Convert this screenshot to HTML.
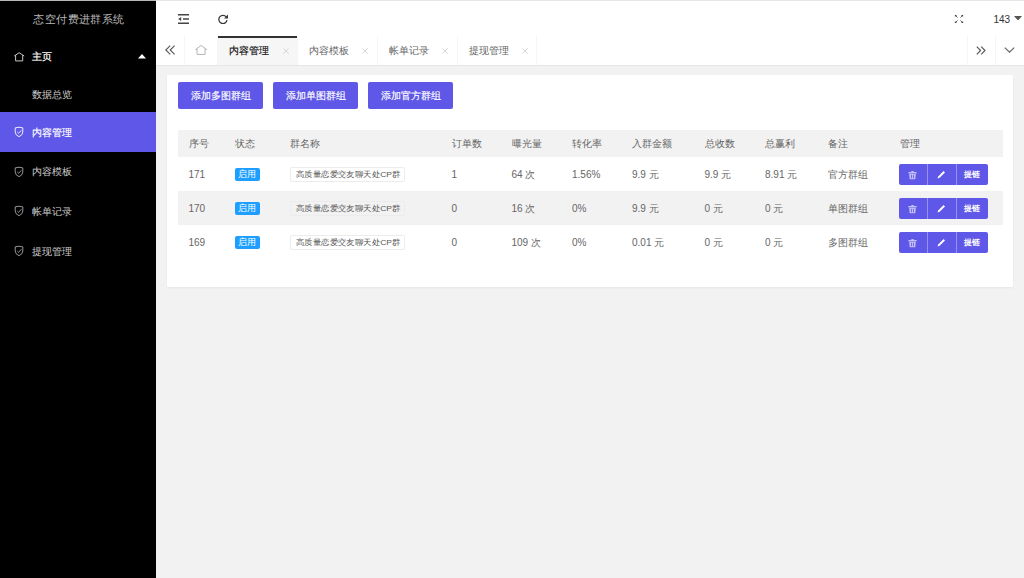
<!DOCTYPE html>
<html><head><meta charset="utf-8">
<style>
*{margin:0;padding:0;box-sizing:border-box}
html,body{width:1024px;height:578px;overflow:hidden;background:#f2f2f2;font-family:"Liberation Sans",sans-serif;color:#666}
.abs{position:absolute}
#topline{position:absolute;left:0;top:0;width:1024px;height:1px;background:#e6e6e6;z-index:10}
#topline2{position:absolute;left:0;top:0;width:156px;height:1px;background:#b9b9b9;z-index:11}
#side{position:absolute;left:0;top:0;width:156px;height:578px;background:#000}
.logo{position:absolute;left:0.8px;top:0.6px;width:156px;height:36px;line-height:36px;text-align:center;color:rgba(255,255,255,.72);font-size:12px;transform:scale(0.95);transform-origin:78px 18.5px}
.nav{position:absolute;left:0;width:156px;height:40px;line-height:40px;font-size:10px;color:rgba(255,255,255,.8)}
.nav .t{position:absolute;left:32px;top:1px}
.nav svg{position:absolute;left:14.4px;top:14.4px}
.nav.on{background:#5f57e7;color:#fff;-webkit-text-stroke:0.15px #fff}
#header{position:absolute;left:156px;top:0;width:868px;height:35px;background:#fff}
#tabs{position:absolute;left:156px;top:35px;width:868px;height:30.6px;background:#fff;border-bottom:1px solid #e6e6e6}
.tab{position:absolute;top:0;height:29px;line-height:29px;font-size:10px;color:#666}
.tab .x{position:absolute;top:12.5px;line-height:0}
.sep{position:absolute;top:1px;width:1px;height:28.6px;background:#f5f5f5}
#card{position:absolute;left:167px;top:75px;width:846px;height:212px;background:#fff;box-shadow:0 1px 2px 0 rgba(0,0,0,.05)}
.btn{position:absolute;top:82px;height:27px;width:85px;line-height:28px;-webkit-text-stroke:0.15px #fff;background:#5f57e7;color:#fff;text-align:center;font-size:10px;border-radius:2px}
table{position:absolute;left:178px;top:130px;width:825px;border-collapse:collapse;table-layout:fixed;font-size:10px;color:#666}
th{height:27px;background:#f2f2f2;font-weight:normal;text-align:left;padding-left:10.5px}
td{height:34px;text-align:left;padding-left:10.5px;padding-top:1px;white-space:nowrap}
tr.even td{background:#f2f2f2}
.badge{display:inline-block;width:25px;height:13px;line-height:13px;background:#1e9fff;color:#fff;font-size:8.5px;text-align:center;border-radius:2px;vertical-align:middle}
.gname{display:inline-block;position:relative;width:114.5px;height:14.5px;border:1px solid #ececec;border-radius:2px;vertical-align:middle;overflow:hidden}
.gname i{position:absolute;left:4.5px;top:0;line-height:13px;font-style:normal;font-size:8px;letter-spacing:0;color:#555;white-space:nowrap;transform:scaleX(1.052);transform-origin:0 50%}
.gname b{font-weight:normal;letter-spacing:0}
.ops{display:inline-block;height:21px;vertical-align:middle;white-space:nowrap;margin-left:-1px}
.op{display:inline-block;height:21px;background:#5f57e7;color:#fff;vertical-align:top;text-align:center;line-height:21px;font-size:8px;font-weight:500}
.op svg{display:block;margin-left:auto;margin-right:auto}
</style></head><body>
<div id="topline"></div><div id="topline2"></div>
<div id="side">
  <div class="logo">态空付费进群系统</div>
  <div class="nav" style="top:35.5px;color:#fff">
    <svg width="11" height="11" viewBox="0 0 11 11" style="top:16px;left:14px"><path d="M0.2 4 L5.2 0.7 L10.2 4 M1.6 3.2 V8.9 H8.7 V3.2" fill="none" stroke="#c8c8c8" stroke-width="1"/></svg>
    <span class="t" style="-webkit-text-stroke:0.2px #fff">主页</span>
    <svg width="8" height="4.5" viewBox="0 0 8 4.5" style="left:137.5px;top:18.5px"><path d="M0 4.5 L4 0 L8 4.5Z" fill="#fff"/></svg>
  </div>
  <div class="nav" style="top:74.5px;height:37px;line-height:37px"><span class="t">数据总览</span></div>
  <div class="nav on" style="top:111.5px">
    <svg width="10" height="11" viewBox="0 0 10 11"><path d="M1.2 1.9 Q5 0.5 8.8 1.9 V6 Q8.8 9.1 5 10.7 Q1.2 9.1 1.2 6 Z M3.3 6 L4.5 7.2 L7.5 4.3" fill="none" stroke="#fff" stroke-width="0.9"/></svg>
    <span class="t">内容管理</span></div>
  <div class="nav" style="top:151.3px">
    <svg width="10" height="11" viewBox="0 0 10 11"><path d="M1.2 1.9 Q5 0.5 8.8 1.9 V6 Q8.8 9.1 5 10.7 Q1.2 9.1 1.2 6 Z M3.3 6 L4.5 7.2 L7.5 4.3" fill="none" stroke="#b0b0b0" stroke-width="0.85"/></svg>
    <span class="t">内容模板</span></div>
  <div class="nav" style="top:191px">
    <svg width="10" height="11" viewBox="0 0 10 11"><path d="M1.2 1.9 Q5 0.5 8.8 1.9 V6 Q8.8 9.1 5 10.7 Q1.2 9.1 1.2 6 Z M3.3 6 L4.5 7.2 L7.5 4.3" fill="none" stroke="#b0b0b0" stroke-width="0.85"/></svg>
    <span class="t">帐单记录</span></div>
  <div class="nav" style="top:230.8px">
    <svg width="10" height="11" viewBox="0 0 10 11"><path d="M1.2 1.9 Q5 0.5 8.8 1.9 V6 Q8.8 9.1 5 10.7 Q1.2 9.1 1.2 6 Z M3.3 6 L4.5 7.2 L7.5 4.3" fill="none" stroke="#b0b0b0" stroke-width="0.85"/></svg>
    <span class="t">提现管理</span></div>
</div>

<div id="header">
  <!-- shrink icon -->
  <svg class="abs" style="left:22px;top:14px" width="11" height="10" viewBox="0 0 11 10"><path d="M0 0.75 H11 M5 5 H11 M0 9.25 H11" stroke="#444" stroke-width="1.5"/><path d="M0.2 5 L3.2 2.9 V7.1 Z" fill="#444"/></svg>
  <!-- refresh -->
  <svg class="abs" style="left:62px;top:14px" width="10" height="10" viewBox="0 0 10 10"><path d="M8.2 2.9 A4.1 4.1 0 1 0 9 6.2" fill="none" stroke="#3a3a3a" stroke-width="1.3"/><path d="M10 0.6 V4.6 H6 Z" fill="#3a3a3a"/></svg>
  <!-- fullscreen -->
  <svg class="abs" style="left:798px;top:14px" width="10" height="10" viewBox="0 0 10 10"><g stroke="#444" stroke-width="0.8" fill="none"><path d="M1.6 1.6 L3.6 3.6 M8.4 1.6 L6.4 3.6 M1.6 8.4 L3.6 6.4 M8.4 8.4 L6.4 6.4"/></g><g fill="#444"><path d="M0.9 0.9 H3.1 L0.9 3.1Z M9.1 0.9 H6.9 L9.1 3.1Z M0.9 9.1 H3.1 L0.9 6.9Z M9.1 9.1 H6.9 L9.1 6.9Z"/></g></svg>
  <div class="abs" style="left:837.5px;top:12.5px;font-size:10px;color:#333;line-height:13px">143</div>
  <svg class="abs" style="left:857.5px;top:15.5px" width="8" height="4.5" viewBox="0 0 8 4.5"><path d="M0 0 H8 L4 4.5Z" fill="#555"/></svg>
</div>

<div id="tabs">
  <svg class="abs" style="left:9px;top:10px" width="11" height="11" viewBox="0 0 11 11"><path d="M5.2 0.6 L0.8 5 L5.2 9.4 M9.6 0.6 L5.2 5 L9.6 9.4" fill="none" stroke="#555" stroke-width="1.1"/></svg>
  <div class="sep" style="left:28px"></div>
  <svg class="abs" style="left:39px;top:10px" width="12" height="11" viewBox="0 0 12 11"><path d="M0.3 4.8 L6.2 0.4 L11.9 4.8 M2 3.5 V9.4 H10.1 V3.5" fill="none" stroke="#b4b4b4" stroke-width="1"/></svg>
  <div class="sep" style="left:61px"></div>
  <div class="tab" style="left:62px;width:79px;background:#f6f6f6;top:2px;height:27.6px;line-height:28px;color:#111"><span style="position:absolute;left:11px;-webkit-text-stroke:0.15px #111">内容管理</span><span class="x" style="left:65px;top:11.3px"><svg width="6" height="6" viewBox="0 0 6 6" style="display:block"><path d="M0.3 0.3 L5.7 5.7 M5.7 0.3 L0.3 5.7" stroke="#cfcfcf" stroke-width="0.8"/></svg></span></div>
  <div class="abs" style="left:62px;top:1px;width:79px;height:2px;background:#333"></div>
  <div class="sep" style="left:141px"></div>
  <div class="tab" style="left:142px;width:79px;line-height:32px"><span style="position:absolute;left:11px">内容模板</span><span class="x" style="left:64px"><svg width="6" height="6" viewBox="0 0 6 6" style="display:block"><path d="M0.3 0.3 L5.7 5.7 M5.7 0.3 L0.3 5.7" stroke="#cfcfcf" stroke-width="0.8"/></svg></span></div>
  <div class="sep" style="left:221px"></div>
  <div class="tab" style="left:222px;width:79px;line-height:32px"><span style="position:absolute;left:11px">帐单记录</span><span class="x" style="left:64px"><svg width="6" height="6" viewBox="0 0 6 6" style="display:block"><path d="M0.3 0.3 L5.7 5.7 M5.7 0.3 L0.3 5.7" stroke="#cfcfcf" stroke-width="0.8"/></svg></span></div>
  <div class="sep" style="left:301px"></div>
  <div class="tab" style="left:302px;width:79px;line-height:32px"><span style="position:absolute;left:11px">提现管理</span><span class="x" style="left:64px"><svg width="6" height="6" viewBox="0 0 6 6" style="display:block"><path d="M0.3 0.3 L5.7 5.7 M5.7 0.3 L0.3 5.7" stroke="#cfcfcf" stroke-width="0.8"/></svg></span></div>
  <div class="sep" style="left:380px"></div>
  <div class="sep" style="left:811px"></div>
  <svg class="abs" style="left:820px;top:11px" width="11" height="9" viewBox="0 0 11 9"><path d="M0.8 0.6 L4.6 4.5 L0.8 8.4 M5.2 0.6 L9 4.5 L5.2 8.4" fill="none" stroke="#5a5a5a" stroke-width="1.2"/></svg>
  <div class="sep" style="left:839px"></div>
  <svg class="abs" style="left:848px;top:12px" width="11" height="6" viewBox="0 0 11 6"><path d="M0.8 0.6 L5.5 5.2 L10.2 0.6" fill="none" stroke="#666" stroke-width="1.2"/></svg>
</div>

<div id="card"></div>
<div class="btn" style="left:178px">添加多图群组</div>
<div class="btn" style="left:273px">添加单图群组</div>
<div class="btn" style="left:368px">添加官方群组</div>

<table>
<colgroup><col style="width:46px"><col style="width:55.5px"><col style="width:161.5px"><col style="width:60px"><col style="width:60.5px"><col style="width:60px"><col style="width:72.5px"><col style="width:60.5px"><col style="width:62.5px"><col style="width:72px"><col style="width:114px"></colgroup>
<tr><th>序号</th><th>状态</th><th>群名称</th><th>订单数</th><th>曝光量</th><th>转化率</th><th>入群金额</th><th>总收数</th><th>总赢利</th><th>备注</th><th>管理</th></tr>
<tr><td>171</td><td><span class="badge">启用</span></td><td><span class="gname"><i>高质量恋爱交友聊天处<b>CP</b>群</i></span></td><td>1</td><td>64 次</td><td>1.56%</td><td>9.9 元</td><td>9.9 元</td><td>8.91 元</td><td>官方群组</td><td><span class="ops"><span class="op" style="width:28px;border-radius:2px 0 0 2px"><svg width="9" height="9" viewBox="0 0 9 9" style="margin-top:6.5px"><g fill="rgba(255,255,255,.62)"><rect x="3.3" y="0" width="2.4" height="1.1"/><rect x="0.3" y="1.1" width="8.4" height="1.3" rx="0.5"/><path d="M1.2 2.9 H7.8 L7.3 8.2 H1.7Z"/></g><g fill="#5f57e7"><rect x="3" y="3.8" width="0.8" height="3.4"/><rect x="5.2" y="3.8" width="0.8" height="3.4"/></g></svg></span><span class="op" style="width:29px;border-left:1px solid #9792f0"><svg width="9" height="9" viewBox="0 0 9 9" style="margin-top:6px"><path d="M0.6 8.4 L1.2 6.4 L6.6 1 L8 2.4 L2.6 7.8 Z" fill="#fff"/></svg></span><span class="op" style="width:32px;border-left:1px solid #9792f0;border-radius:0 2px 2px 0;font-weight:600;padding-right:1px">提链</span></span></td></tr>
<tr class="even"><td>170</td><td><span class="badge">启用</span></td><td><span class="gname"><i>高质量恋爱交友聊天处<b>CP</b>群</i></span></td><td>0</td><td>16 次</td><td>0%</td><td>9.9 元</td><td>0 元</td><td>0 元</td><td>单图群组</td><td><span class="ops"><span class="op" style="width:28px;border-radius:2px 0 0 2px"><svg width="9" height="9" viewBox="0 0 9 9" style="margin-top:6.5px"><g fill="rgba(255,255,255,.62)"><rect x="3.3" y="0" width="2.4" height="1.1"/><rect x="0.3" y="1.1" width="8.4" height="1.3" rx="0.5"/><path d="M1.2 2.9 H7.8 L7.3 8.2 H1.7Z"/></g><g fill="#5f57e7"><rect x="3" y="3.8" width="0.8" height="3.4"/><rect x="5.2" y="3.8" width="0.8" height="3.4"/></g></svg></span><span class="op" style="width:29px;border-left:1px solid #9792f0"><svg width="9" height="9" viewBox="0 0 9 9" style="margin-top:6px"><path d="M0.6 8.4 L1.2 6.4 L6.6 1 L8 2.4 L2.6 7.8 Z" fill="#fff"/></svg></span><span class="op" style="width:32px;border-left:1px solid #9792f0;border-radius:0 2px 2px 0;font-weight:600;padding-right:1px">提链</span></span></td></tr>
<tr><td>169</td><td><span class="badge">启用</span></td><td><span class="gname"><i>高质量恋爱交友聊天处<b>CP</b>群</i></span></td><td>0</td><td>109 次</td><td>0%</td><td>0.01 元</td><td>0 元</td><td>0 元</td><td>多图群组</td><td><span class="ops"><span class="op" style="width:28px;border-radius:2px 0 0 2px"><svg width="9" height="9" viewBox="0 0 9 9" style="margin-top:6.5px"><g fill="rgba(255,255,255,.62)"><rect x="3.3" y="0" width="2.4" height="1.1"/><rect x="0.3" y="1.1" width="8.4" height="1.3" rx="0.5"/><path d="M1.2 2.9 H7.8 L7.3 8.2 H1.7Z"/></g><g fill="#5f57e7"><rect x="3" y="3.8" width="0.8" height="3.4"/><rect x="5.2" y="3.8" width="0.8" height="3.4"/></g></svg></span><span class="op" style="width:29px;border-left:1px solid #9792f0"><svg width="9" height="9" viewBox="0 0 9 9" style="margin-top:6px"><path d="M0.6 8.4 L1.2 6.4 L6.6 1 L8 2.4 L2.6 7.8 Z" fill="#fff"/></svg></span><span class="op" style="width:32px;border-left:1px solid #9792f0;border-radius:0 2px 2px 0;font-weight:600;padding-right:1px">提链</span></span></td></tr>
</table>
</body></html>
